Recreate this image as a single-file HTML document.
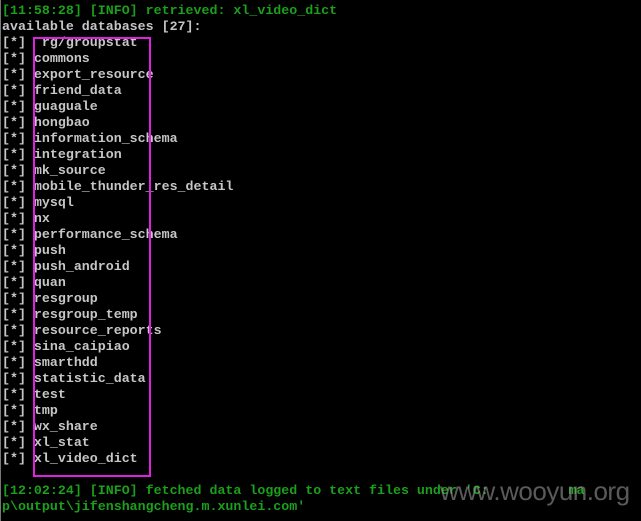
<!DOCTYPE html>
<html><head><meta charset="utf-8"><style>
html,body{margin:0;padding:0;background:#000;width:641px;height:521px;overflow:hidden;position:relative}
pre{margin:0;position:absolute;left:2px;top:3px;font-family:"Liberation Mono",monospace;font-weight:bold;font-size:13.3px;line-height:16px;color:#c6c6c6;letter-spacing:0}
.g{color:#1aa01a}
#box{position:absolute;left:33px;top:37px;width:114px;height:436px;border:2px solid #e020e0}
#wm{position:absolute;left:440px;top:476px;font-family:"Liberation Sans",sans-serif;font-size:26px;color:rgba(150,150,150,0.6);letter-spacing:-0.5px}
#lb{position:absolute;left:0;top:0;width:1px;height:521px;background:#777}
</style></head><body>
<pre><span class="g">[11:58:28] [INFO] retrieved: xl_video_dict</span>
available databases [27]:
[*]  rg/groupstat
[*] commons
[*] export_resource
[*] friend_data
[*] guaguale
[*] hongbao
[*] information_schema
[*] integration
[*] mk_source
[*] mobile_thunder_res_detail
[*] mysql
[*] nx
[*] performance_schema
[*] push
[*] push_android
[*] quan
[*] resgroup
[*] resgroup_temp
[*] resource_reports
[*] sina_caipiao
[*] smarthdd
[*] statistic_data
[*] test
[*] tmp
[*] wx_share
[*] xl_stat
[*] xl_video_dict

<span class="g">[12:02:24] [INFO] fetched data logged to text files under 'C:          ma
p\output\jifenshangcheng.m.xunlei.com'</span></pre>
<div id="box"></div>
<div id="wm">www.wooyun.org</div>
<div id="lb"></div>
</body></html>
